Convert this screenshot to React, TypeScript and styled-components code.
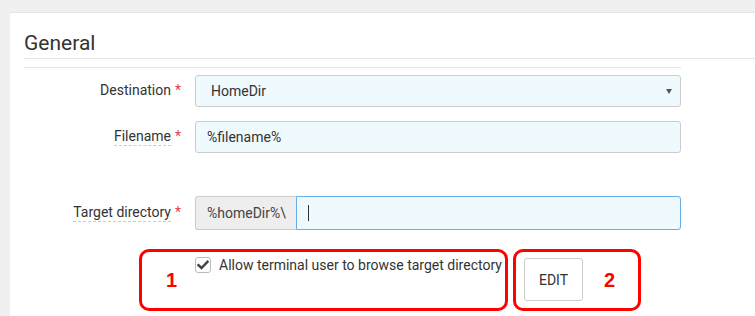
import * as React from 'react';
import styled, { createGlobalStyle } from 'styled-components';

const GlobalStyle = createGlobalStyle`
	html, body {
		margin: 0;
		padding: 0;
		background: #f0f0f0;
		font-family: Roboto, "Liberation Sans", Arial, sans-serif;
		color: #333;
	}
	body {
		width: 755px;
		height: 316px;
		overflow: hidden;
	}
`;

const Page = styled.div`
	padding: 12px 0 0 10px;
	height: 316px;
	box-sizing: border-box;
	display: flex;
	flex-direction: column;
`;

const Card = styled.div`
	flex: 1;
	background: #fff;
	border-top: 1px solid #e4e4e4;
	padding: 0 0 0 14px;
	box-sizing: border-box;
	overflow: hidden;
`;

const Heading = styled.h2`
	margin: 0;
	padding: 18px 0 3px 0;
	font-size: 21px;
	line-height: 24px;
	font-weight: 400;
	color: #333;
	border-bottom: 1px solid #e5e5e5;
`;

const Form = styled.div`
	width: 657px;
	margin-top: 8px;
	padding-top: 7px;
	border-top: 1px solid #e5e5e5;
	display: flex;
	flex-direction: column;
`;

const Row = styled.div<{ $gap?: number }>`
	display: flex;
	align-items: center;
	gap: 14px;
	margin-top: ${p => p.$gap ?? 0}px;
`;

const Label = styled.div`
	width: 157px;
	display: flex;
	justify-content: flex-end;
	font-size: 14px;
	color: #333;
	white-space: nowrap;
`;

const LabelText = styled.span<{ $hint?: boolean }>`
	border-bottom: 1px ${p => p.$hint ? 'dashed #ccc' : 'solid transparent'};
	padding-bottom: 1px;
`;

const Required = styled.span`
	color: #e8423f;
	margin-left: 4px;
`;

const Control = styled.div<{ $h?: number }>`
	width: 486px;
	height: ${p => p.$h ?? 32}px;
	display: flex;
`;

const Select = styled.div`
	flex: 1;
	display: flex;
	align-items: center;
	justify-content: space-between;
	background: #effaff;
	border: 1px solid #ccc;
	border-radius: 3px;
	padding: 0 8px 0 15px;
	font-size: 14px;
	color: #333;
`;

const Arrow = styled.span`
	width: 0;
	height: 0;
	border-left: 3px solid transparent;
	border-right: 3px solid transparent;
	border-top: 5px solid #555;
`;

const Input = styled.div<{ $focus?: boolean; $joined?: boolean }>`
	flex: 1;
	display: flex;
	align-items: center;
	background: #effaff;
	border: 1px solid ${p => p.$focus ? '#66aee6' : '#ccc'};
	border-radius: ${p => p.$joined ? '0 3px 3px 0' : '3px'};
	padding: 0 11px;
	font-size: 14px;
	color: #333;
`;

const Caret = styled.span`
	width: 1px;
	height: 16px;
	background: #333;
`;

const Addon = styled.div`
	width: 101px;
	box-sizing: border-box;
	display: flex;
	align-items: center;
	padding-left: 11px;
	background: #eee;
	border: 1px solid #ccc;
	border-right: none;
	border-radius: 3px 0 0 3px;
	font-size: 14px;
	color: #444;
`;

const Annotations = styled.div`
	display: flex;
	gap: 5px;
	margin: 19px 0 0 115px;
`;

const Marker = styled.div<{ $w: number }>`
	width: ${p => p.$w}px;
	height: 62px;
	box-sizing: border-box;
	border: 3px solid #f00;
	border-radius: 10px;
	display: flex;
`;

const Number = styled.span`
	align-self: center;
	font-family: "Liberation Sans", Arial, sans-serif;
	font-weight: 700;
	font-size: 20px;
	color: #f00;
`;

const CheckRow = styled.label`
	display: flex;
	align-items: center;
	gap: 8px;
	margin-top: 5px;
	height: 16px;
	font-size: 14px;
	color: #333;
	white-space: nowrap;
`;

const CheckBox = styled.span`
	width: 16px;
	height: 16px;
	box-sizing: border-box;
	border: 1px solid #bbb;
	border-radius: 3px;
	background: #fff;
	display: flex;
	align-items: center;
	justify-content: center;
`;

const Button = styled.div`
	width: 59px;
	height: 43px;
	box-sizing: border-box;
	margin: 6px 0 0 8px;
	border: 1px solid #ccc;
	border-radius: 3px;
	background: #fff;
	display: flex;
	align-items: center;
	justify-content: center;
	font-size: 14px;
	color: #333;
`;

export default function App() {
	return (
		<>
			<GlobalStyle />
			<Page>
				<Card>
					<Heading>General</Heading>
					<Form>
						<Row>
							<Label><LabelText>Destination</LabelText><Required>*</Required></Label>
							<Control>
								<Select>HomeDir<Arrow /></Select>
							</Control>
						</Row>
						<Row $gap={14}>
							<Label><LabelText $hint>Filename</LabelText><Required>*</Required></Label>
							<Control>
								<Input>%filename%</Input>
							</Control>
						</Row>
						<Row $gap={43}>
							<Label><LabelText $hint>Target directory</LabelText><Required>*</Required></Label>
							<Control $h={34}>
								<Addon>%homeDir%\</Addon>
								<Input $focus $joined><Caret /></Input>
							</Control>
						</Row>
						<Annotations>
							<Marker $w={369} style={{ paddingLeft: 24 }}>
								<Number style={{ width: 29 }}>1</Number>
								<CheckRow>
									<CheckBox>
										<svg width="12" height="10" viewBox="0 0 12 10">
											<path d="M1.5 5.2 L4.5 8 L10.5 1.8" fill="none" stroke="#444" strokeWidth="2.4" strokeLinecap="square" />
										</svg>
									</CheckBox>
									Allow terminal user to browse target directory
								</CheckRow>
							</Marker>
							<Marker $w={128}>
								<Button>EDIT</Button>
								<Number style={{ marginLeft: 21 }}>2</Number>
							</Marker>
						</Annotations>
					</Form>
				</Card>
			</Page>
		</>
	);
}
